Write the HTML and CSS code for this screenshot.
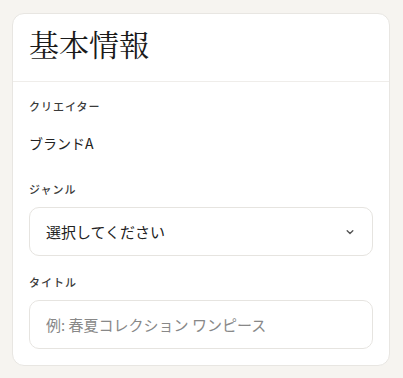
FILE: index.html
```html
<!DOCTYPE html>
<html lang="ja">
<head>
  <meta charset="UTF-8">
  <meta name="viewport" content="width=device-width, initial-scale=1.0">
  <title>基本情報</title>
  <link rel="stylesheet" href="styles.css">
</head>
<body>
  <!-- Basic info card -->
  <section class="card">
    <div class="card-header">
      <h2>基本情報</h2>
    </div>
    <div class="card-body">
      <div class="field">
        <div class="label">クリエイター</div>
        <div class="value">ブランドA</div>
      </div>
      <div class="field">
        <label class="label" for="genre">ジャンル</label>
        <div class="select-box" id="genre">
          <span>選択してください</span>
          <svg class="chevron" width="12" height="12" viewBox="0 0 12 12">
            <path d="M3.2 4.8 L6 7.4 L8.8 4.8" fill="none" stroke="#555" stroke-width="1.4" stroke-linecap="round" stroke-linejoin="round"/>
          </svg>
        </div>
      </div>
      <div class="field">
        <label class="label" for="title">タイトル</label>
        <input type="text" id="title" class="text-input" placeholder="例: 春夏コレクション ワンピース">
      </div>
    </div>
  </section>
</body>
</html>
```

FILE: styles.css
```css
body {
  margin: 0;
  padding: 13px 13px 12px 12px;
  background-color: #f6f4f0;
  font-family: 'Noto Sans CJK JP', 'Noto Sans', sans-serif;
  color: #222;
}

.card {
  background: #fff;
  border: 1px solid #e8e6e2;
  border-radius: 12px;
  overflow: hidden;
}

.card-header {
  padding: 8px 16px 17px;
  border-bottom: 1px solid #efedea;
}

.card-header h2 {
  margin: 0;
  font-family: 'Noto Serif CJK JP', 'Liberation Serif', serif;
  font-weight: 400;
  font-size: 30px;
  line-height: 42px;
  color: #1a1a1a;
}

.card-body {
  padding: 15px 16px 16px;
}

.field {
  margin-bottom: 17px;
}

.field:last-child {
  margin-bottom: 0;
}

.label {
  display: block;
  font-size: 11px;
  font-weight: 500;
  letter-spacing: 1px;
  color: #3a3a3a;
  line-height: 18px;
  margin-bottom: 9px;
}

.value {
  font-size: 14px;
  line-height: 20px;
  color: #222;
  padding: 9px 0 10px;
}

.select-box,
.text-input {
  box-sizing: border-box;
  width: 100%;
  height: 49px;
  border: 1px solid #e6e4e0;
  border-radius: 10px;
  padding: 0 16px;
  font-size: 15px;
  font-family: inherit;
  background: #fff;
}

.select-box {
  display: flex;
  align-items: center;
  justify-content: space-between;
  color: #222;
}

.text-input {
  color: #222;
  outline: none;
}

.text-input::placeholder {
  color: #888;
}
```
